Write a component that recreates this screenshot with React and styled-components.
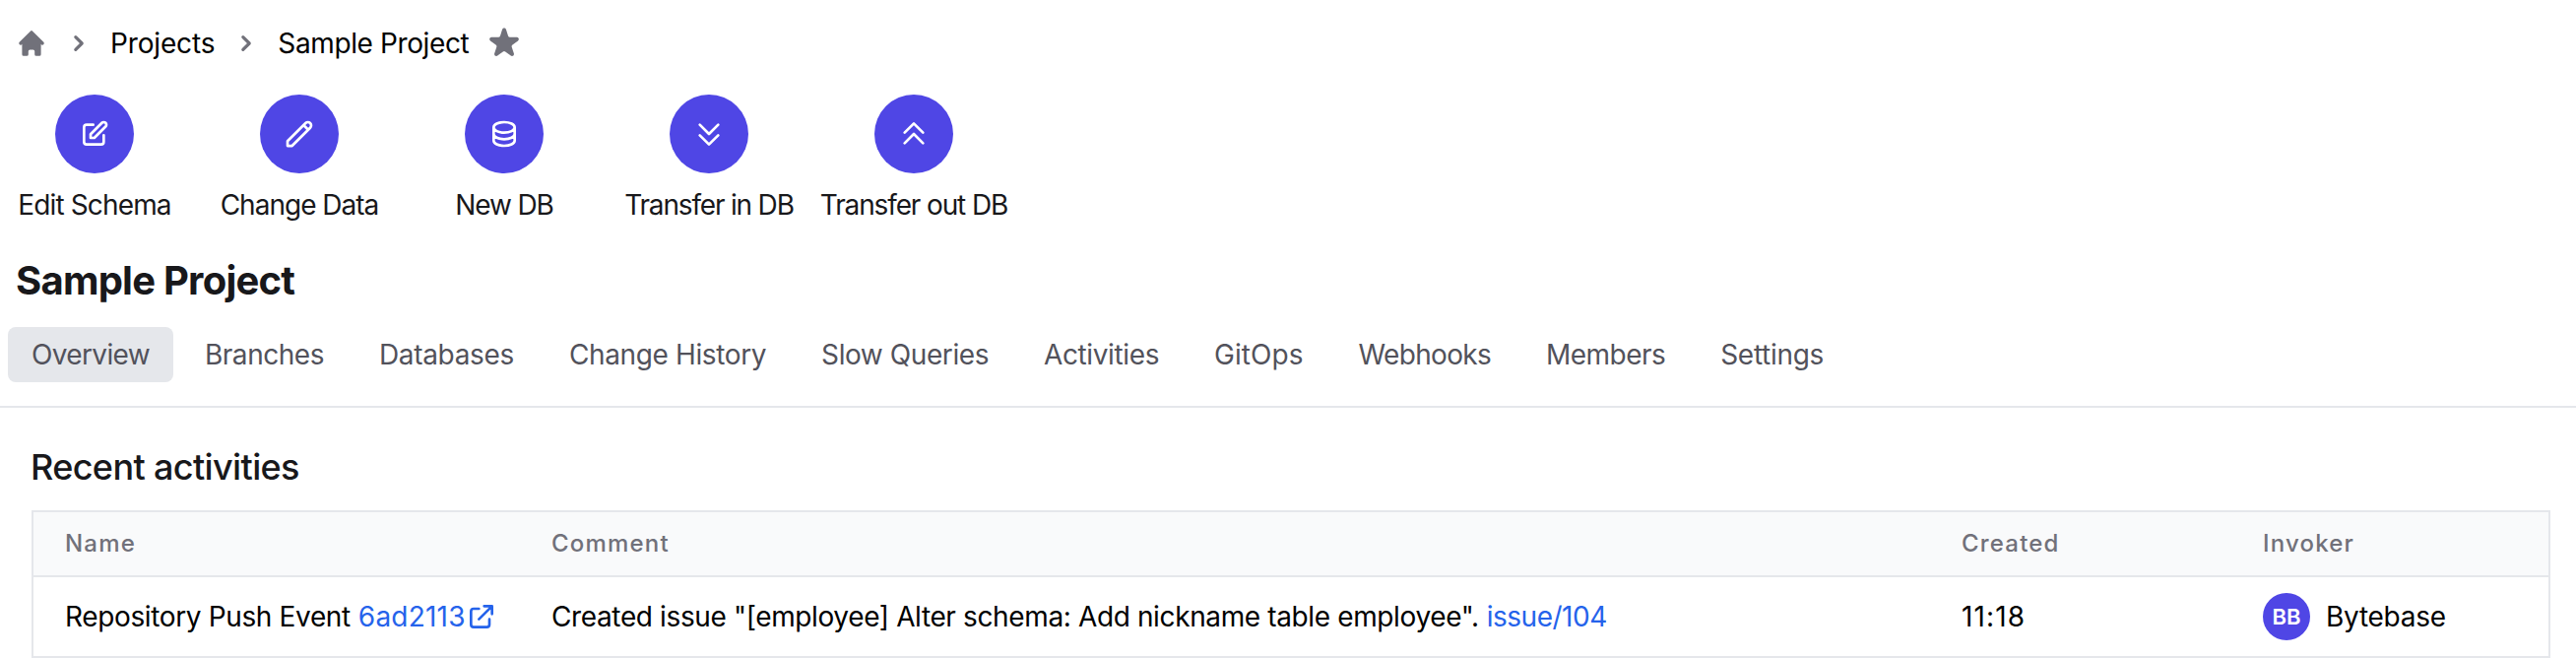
import React from "react";
import styled, { createGlobalStyle } from "styled-components";
import {
  HiHome, HiChevronRight, HiStar, HiOutlinePencilAlt, HiOutlinePencil, HiOutlineDatabase,
  HiOutlineChevronDoubleDown, HiOutlineChevronDoubleUp, HiOutlineExternalLink,
} from "react-icons/hi";

const Global = createGlobalStyle`
  * { box-sizing: border-box; }
  body { margin: 0; background: #fff; font-family: Inter, "Liberation Sans", sans-serif; }
`;
const Page = styled.main`
  width: 100%; height: 668px; overflow: hidden;
  font-size: 28px; line-height: 40px; color: #000; white-space: nowrap;
`;
const Breadcrumb = styled.nav`
  display: flex; align-items: center; gap: 16px; height: 88px; padding-left: 16px;
  svg { color: #71717a; flex: none; }
`;
const Text = styled.span`
  letter-spacing: ${(p) => p.$tracking || 0}px;
`;
const Actions = styled.section`
  display: flex; gap: 16px; padding-top: 8px; height: 168px;
`;
const Action = styled.div`
  width: 192px; display: flex; flex-direction: column; align-items: center; gap: 12px; color: #18181b;
`;
const Circle = styled.div`
  width: 80px; height: 80px; border-radius: 50%; background: #4f46e5; color: #fff;
  display: flex; align-items: center; justify-content: center;
`;
const Title = styled.h1`
  margin: 0; padding: 1px 0 0 16px; height: 76px;
  font-size: 40px; line-height: 56px; font-weight: 700; letter-spacing: -0.76px; color: #18181b;
`;
const Tabs = styled.nav`
  display: flex; gap: 8px; padding-left: 8px; height: 82px; border-bottom: 2px solid #e5e7eb;
`;
const Tab = styled.a`
  height: 56px; padding: 8px 24px; border-radius: 8px; font-weight: 400; color: #52525b;
  letter-spacing: ${(p) => p.$tracking}px;
  background: ${(p) => (p.$active ? "#e5e7eb" : "transparent")};
`;
const Heading = styled.h2`
  margin: 0; padding: 32px 0 0 31px; height: 104px;
  font-size: 36px; line-height: 56px; font-weight: 500; letter-spacing: -0.63px; color: #18181b;
`;
const Table = styled.div`
  margin: 0 26px 0 32px; border: 2px solid #e5e7eb;
`;
const Row = styled.div`
  display: grid; grid-template-columns: 494px 1432px 306px 1fr; align-items: center;
  height: 80px; padding-left: 32px;
`;
const HeadRow = styled(Row)`
  height: 66px; background: #f9fafb; border-bottom: 2px solid #e5e7eb;
  color: #71717a; font-size: 24px; font-weight: 500; letter-spacing: 0.05em;
`;
const Cell = styled.div`
  display: flex; align-items: center;
`;
const Link = styled.a`
  display: inline-flex; align-items: center; margin-left: 8px; color: #2563eb;
  letter-spacing: ${(p) => p.$tracking || 0}px;
`;
const Avatar = styled.div`
  width: 48px; height: 48px; margin-right: 16px; border-radius: 50%; background: #4f46e5; color: #fff;
  display: flex; align-items: center; justify-content: center; font-size: 22px; font-weight: 600;
`;

const actions = [
  ["Edit Schema", HiOutlinePencilAlt, -0.87],
  ["Change Data", HiOutlinePencil, -0.99],
  ["New DB", HiOutlineDatabase, -1.15],
  ["Transfer in DB", HiOutlineChevronDoubleDown, -1.18],
  ["Transfer out DB", HiOutlineChevronDoubleUp, -1.13],
];
const tabs = [
  ["Overview", -0.65],
  ["Branches", -0.47],
  ["Databases", -0.33],
  ["Change History", -0.38],
  ["Slow Queries", -0.42],
  ["Activities", -0.38],
  ["GitOps", 0.05],
  ["Webhooks", -0.67],
  ["Members", -0.55],
  ["Settings", -0.3],
];

export default function App() {
  return (
    <Page>
      <Global />
      <Breadcrumb>
        <HiHome size={32} />
        <HiChevronRight size={32} />
        <Text $tracking={-0.15}>Projects</Text>
        <HiChevronRight size={32} />
        <Text $tracking={-0.38}>Sample Project</Text>
        <HiStar size={40} />
      </Breadcrumb>
      <Actions>
        {actions.map(([label, Icon, tracking]) => (
          <Action key={label}>
            <Circle><Icon size={32} /></Circle>
            <Text $tracking={tracking}>{label}</Text>
          </Action>
        ))}
      </Actions>
      <Title>Sample Project</Title>
      <Tabs>
        {tabs.map(([label, tracking], i) => (
          <Tab key={label} $active={i === 0} $tracking={tracking}>{label}</Tab>
        ))}
      </Tabs>
      <Heading>Recent activities</Heading>
      <Table>
        <HeadRow>
          <Cell>Name</Cell><Cell>Comment</Cell><Cell>Created</Cell><Cell>Invoker</Cell>
        </HeadRow>
        <Row>
          <Cell>
            <Text $tracking={-0.36}>Repository Push Event</Text>
            <Link $tracking={0.2}>6ad2113<HiOutlineExternalLink size={32} /></Link>
          </Cell>
          <Cell>
            <Text $tracking={-0.37}>Created issue "[employee] Alter schema: Add nickname table employee".</Text>
            <Link $tracking={-0.5}>issue/104</Link>
          </Cell>
          <Cell><Text $tracking={1.1}>11:18</Text></Cell>
          <Cell><Avatar>BB</Avatar><Text $tracking={-0.27}>Bytebase</Text></Cell>
        </Row>
      </Table>
    </Page>
  );
}
